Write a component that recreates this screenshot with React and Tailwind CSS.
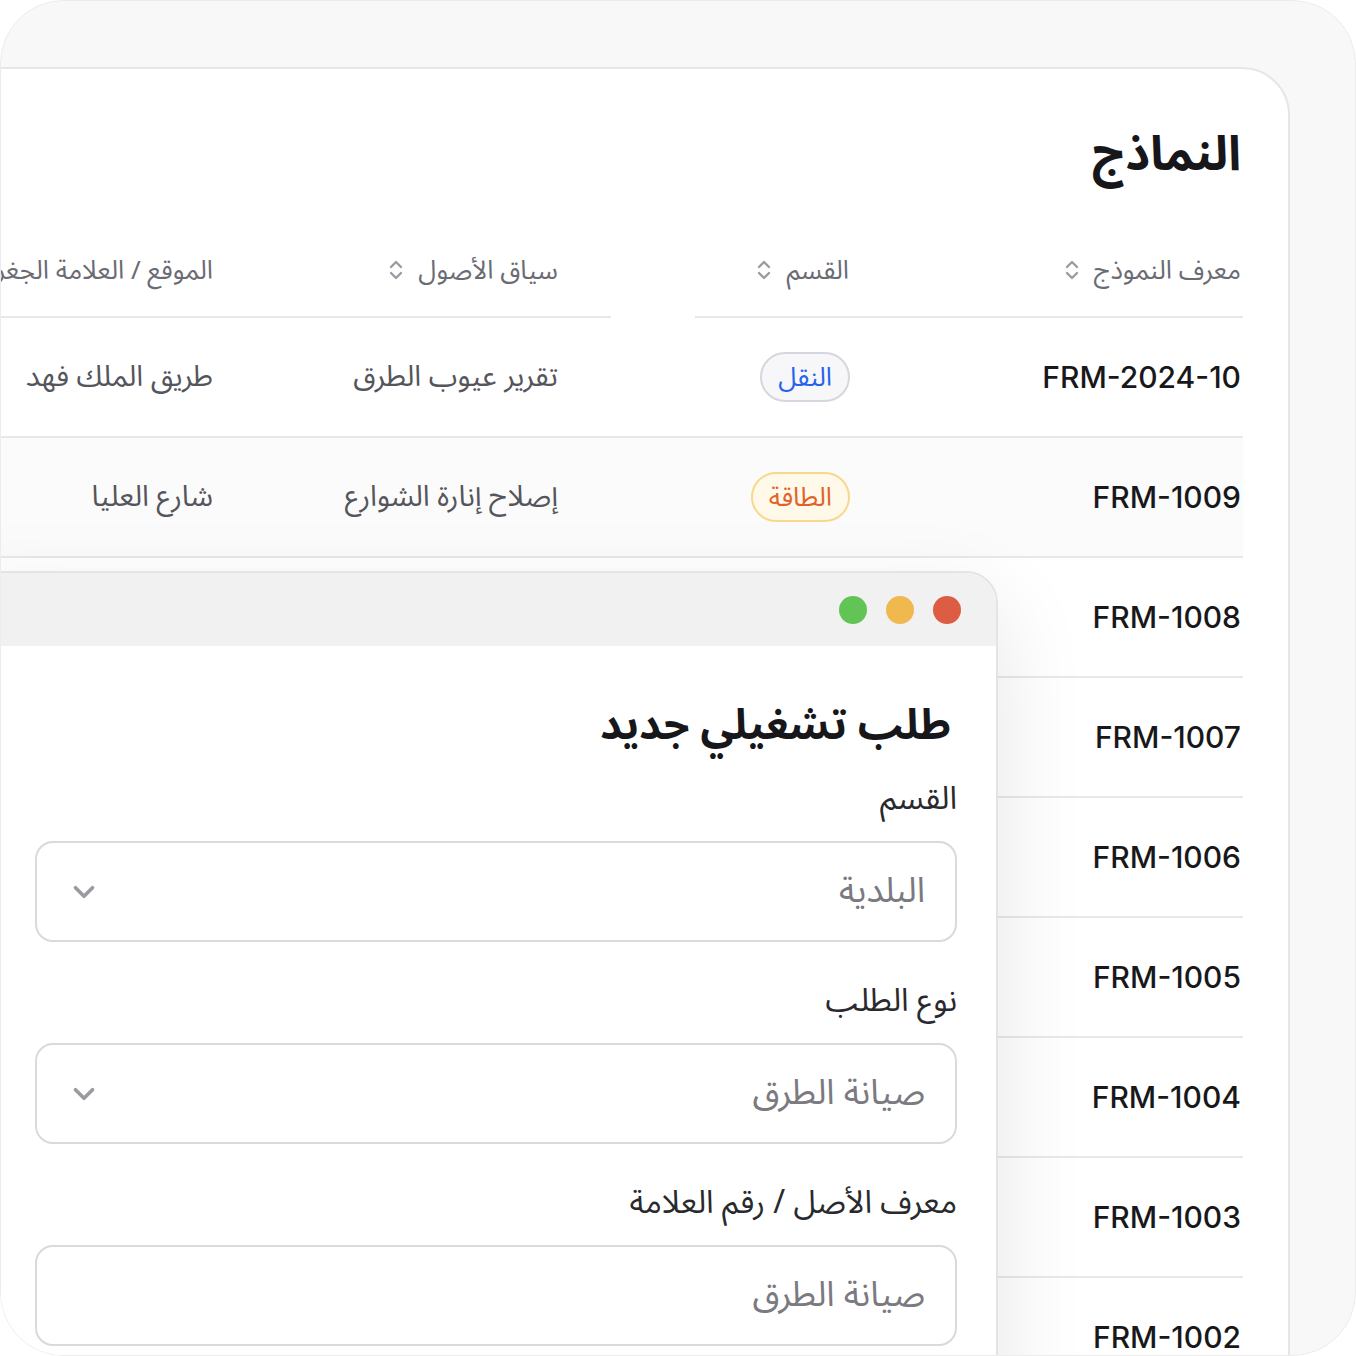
import React from 'react';
import { ChevronDown } from 'lucide-react';

const ar = { fontFamily: '"Noto Sans Arabic", "Noto Sans", "DejaVu Sans", sans-serif' };
const latin = { fontFamily: 'Inter, "Noto Sans", sans-serif' };

const rows = [
  { id: 'FRM-2024-10', dept: 'النقل', tone: 'blue', asset: 'تقرير عيوب الطرق', loc: 'طريق الملك فهد' },
  { id: 'FRM-1009', dept: 'الطاقة', tone: 'amber', asset: 'إصلاح إنارة الشوارع', loc: 'شارع العليا', shaded: true },
  { id: 'FRM-1008' },
  { id: 'FRM-1007' },
  { id: 'FRM-1006' },
  { id: 'FRM-1005' },
  { id: 'FRM-1004' },
  { id: 'FRM-1003' },
  { id: 'FRM-1002' },
];

const SortIcon = () => (
  <svg width="16" height="24" viewBox="0 0 16 24" fill="none" stroke="#9b9ba3" strokeWidth="2.4" strokeLinecap="round" strokeLinejoin="round">
    <path d="M3 9l5-5 5 5" />
    <path d="M3 15l5 5 5-5" />
  </svg>
);

const Badge = ({ tone, children }) => {
  const cls =
    tone === 'blue'
      ? 'border-[#d6d6de] bg-[#f7f7f9] text-[#2563eb]'
      : 'border-[#f7d88c] bg-[#fff9ea] text-[#e2622a]';
  return (
    <span className={`inline-flex h-[50px] items-center rounded-full border-2 px-4 text-[26px] ${cls}`} style={ar}>
      {children}
    </span>
  );
};

const Field = ({ label, value, select }) => (
  <div className="flex flex-col items-start">
    <div className="h-[42px] text-[32px] leading-[42px] text-[#2a2a2e]" style={ar}>{label}</div>
    <div className="mt-[21px] flex h-[101px] w-[922px] items-center justify-between rounded-[18px] border-2 border-[#d9d9de] bg-white pl-[30px] pr-[30px]">
      <span className="text-[35px] text-[#7a7a80]" style={ar}>{value}</span>
      {select && <ChevronDown size={34} strokeWidth={2.6} color="#9a9aa0" />}
    </div>
  </div>
);

export default function App() {
  return (
    <div className="h-[1356px] w-[1356px] bg-white">
      <div className="relative h-full w-full overflow-hidden rounded-[64px] border border-[#ececec] bg-[#f8f8f8]">
        {/* forms card */}
        <div dir="rtl" className="ml-[-60px] mt-[66px] h-[1400px] w-[1349px] rounded-tr-[48px] border-2 border-[#e6e6e6] bg-white pr-[45px]">
          <h1 className="mt-[57px] h-[58px] pr-[2px] text-[48px] font-bold leading-[58px] text-[#17171b]" style={ar}>النماذج</h1>

          <div className="mt-[40px] grid h-[94px] grid-cols-[362px_186px_84px_316px_1fr] text-[26px] text-[#6b6b74]" style={ar}>
            <div className="flex items-center gap-[14px] border-b-2 border-[#e8e8ea] pr-[2px]">معرف النموذج <SortIcon /></div>
            <div className="flex items-center gap-[14px] border-b-2 border-[#e8e8ea] pr-[32px]">القسم <SortIcon /></div>
            <div />
            <div className="flex items-center gap-[14px] border-b-2 border-[#e8e8ea] pr-[53px]">سياق الأصول <SortIcon /></div>
            <div className="flex items-center gap-[14px] overflow-hidden whitespace-nowrap border-b-2 border-[#e8e8ea] pr-[82px]">الموقع / العلامة الجغرافية <SortIcon /></div>
          </div>

          {rows.map((r) => (
            <div
              key={r.id}
              className={`grid h-[120px] grid-cols-[362px_186px_84px_316px_1fr] items-center border-b-2 border-[#e8e8ea] ${r.shaded ? 'bg-[#fbfbfb]' : ''}`}
            >
              <div className="pr-[2px] text-[30px] font-medium text-[#18181b]" style={latin}>{r.id}</div>
              <div className="pr-[31px]">{r.dept && <Badge tone={r.tone}>{r.dept}</Badge>}</div>
              <div />
              <div className="pr-[53px] text-[29px] text-[#55555c]" style={ar}>{r.asset}</div>
              <div className="whitespace-nowrap pr-[82px] text-[29px] text-[#55555c]" style={ar}>{r.loc}</div>
            </div>
          ))}
        </div>

        {/* new request window */}
        <div dir="rtl" className="absolute left-[-40px] top-[570px] h-[900px] w-[1037px] overflow-hidden rounded-tr-[32px] border-2 border-[#e4e4e6] bg-white shadow-[0_30px_90px_rgba(0,0,0,0.10)]">
          <div className="flex h-[73px] items-center gap-[19px] bg-[#f1f1f2] pr-[35px]">
            <span className="h-[28px] w-[28px] rounded-full bg-[#dc5d44]" />
            <span className="h-[28px] w-[28px] rounded-full bg-[#efb94f]" />
            <span className="h-[28px] w-[28px] rounded-full bg-[#63c456]" />
          </div>
          <div className="pr-[39px] pt-[54px]">
            <h2 className="h-[52px] pr-[6px] text-[42px] font-bold leading-[52px] text-[#17171b]" style={ar}>طلب تشغيلي جديد</h2>
            <div className="mt-[26px] flex flex-col gap-[38px]">
              <Field label="القسم" value="البلدية" select />
              <Field label="نوع الطلب" value="صيانة الطرق" select />
              <Field label="معرف الأصل / رقم العلامة" value="صيانة الطرق" />
            </div>
          </div>
        </div>
      </div>
    </div>
  );
}
